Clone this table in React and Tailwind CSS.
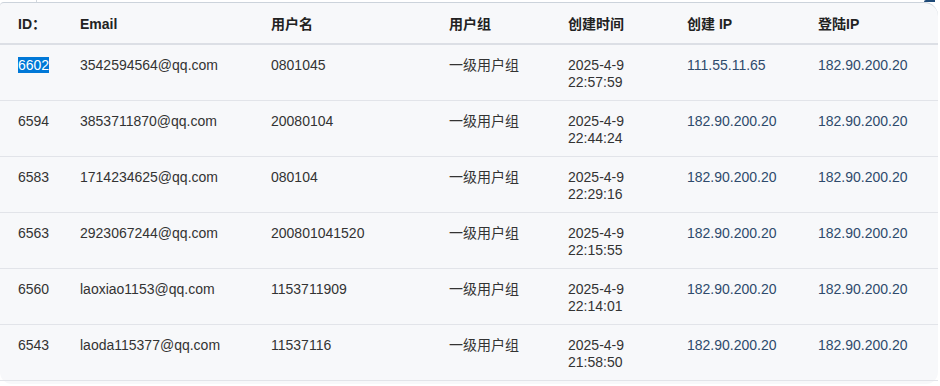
import React from "react";

const rows = [
  { id: "6602", email: "3542594564@qq.com", user: "0801045", date: "2025-4-9", time: "22:57:59", cip: "111.55.11.65", lip: "182.90.200.20", sel: true },
  { id: "6594", email: "3853711870@qq.com", user: "20080104", date: "2025-4-9", time: "22:44:24", cip: "182.90.200.20", lip: "182.90.200.20" },
  { id: "6583", email: "1714234625@qq.com", user: "080104", date: "2025-4-9", time: "22:29:16", cip: "182.90.200.20", lip: "182.90.200.20" },
  { id: "6563", email: "2923067244@qq.com", user: "200801041520", date: "2025-4-9", time: "22:15:55", cip: "182.90.200.20", lip: "182.90.200.20" },
  { id: "6560", email: "laoxiao1153@qq.com", user: "1153711909", date: "2025-4-9", time: "22:14:01", cip: "182.90.200.20", lip: "182.90.200.20" },
  { id: "6543", email: "laoda115377@qq.com", user: "11537116", date: "2025-4-9", time: "21:58:50", cip: "182.90.200.20", lip: "182.90.200.20" },
];

const cols = "grid grid-cols-[62px_191px_178px_119px_119px_131px_138px]";

export default function App() {
  return (
    <div className="w-[940px] h-[386px] bg-white overflow-hidden" style={{ fontFamily: '"Liberation Sans", Arial, "Noto Sans CJK SC", sans-serif' }}>
      <div className="flex h-[2px]">
        <div className="w-[36px]" />
        <div className="w-px bg-[#d3d8de]" />
        <div className="flex-1" />
        <div className="w-[11px] bg-[#1f4a78] rounded-tl-[3px]" />
        <div className="w-[5px]" />
      </div>
      <div className="w-[938px] h-[382px] bg-[#f7f8fa] border-t border-[#ccd3db] rounded-tl-[4px] rounded-tr-[14px] rounded-b-[12px] text-[14px] leading-[17px]">
        <div className={cols + " h-[42px] border-b-2 border-[#dcdfe5] font-bold text-[#222]"}>
          {["ID：", "Email", "用户名", "用户组", "创建时间", "创建 IP", "登陆IP"].map(h => (
            <div key={h} className="pl-[18px] pt-[13px]">{h}</div>
          ))}
        </div>
        {rows.map(r => (
          <div key={r.id} className={cols + " h-[56px] border-b border-[#e2e4e9] text-[#333]"}>
            <div className="pl-[18px] pt-[12px]">
              {r.sel ? <span className="bg-[#0078d7] text-white">{r.id}</span> : r.id}
            </div>
            <div className="pl-[18px] pt-[12px]">{r.email}</div>
            <div className="pl-[18px] pt-[12px]">{r.user}</div>
            <div className="pl-[18px] pt-[12px]">一级用户组</div>
            <div className="pl-[18px] pt-[12px]">
              <div>{r.date}</div>
              <div>{r.time}</div>
            </div>
            <div className="pl-[18px] pt-[12px] text-[#2e4a6c]">{r.cip}</div>
            <div className="pl-[18px] pt-[12px] text-[#2e4a6c]">{r.lip}</div>
          </div>
        ))}
      </div>
    </div>
  );
}
